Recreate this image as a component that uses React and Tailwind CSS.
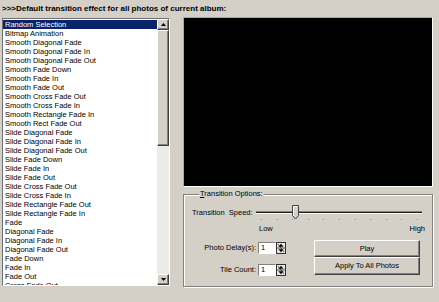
const effects = [
  "Random Selection",
  "Bitmap Animation",
  "Smooth Diagonal Fade",
  "Smooth Diagonal Fade In",
  "Smooth Diagonal Fade Out",
  "Smooth Fade Down",
  "Smooth Fade In",
  "Smooth Fade Out",
  "Smooth Cross Fade Out",
  "Smooth Cross Fade In",
  "Smooth Rectangle Fade In",
  "Smooth Rect Fade Out",
  "Slide Diagonal Fade",
  "Slide Diagonal Fade In",
  "Slide Diagonal Fade Out",
  "Slide Fade Down",
  "Slide Fade In",
  "Slide Fade Out",
  "Slide Cross Fade Out",
  "Slide Cross Fade In",
  "Slide Rectangle Fade Out",
  "Slide Rectangle Fade In",
  "Fade",
  "Diagonal Fade",
  "Diagonal Fade In",
  "Diagonal Fade Out",
  "Fade Down",
  "Fade In",
  "Fade Out",
  "Cross Fade Out",
];

function ScrollButton({ dir }) {
  return (
    <div className="flex h-[11px] items-center justify-center border border-t-white border-l-white border-r-[#404040] border-b-[#404040] bg-[#d4d0c8] shadow-[inset_-1px_-1px_0_#808080]">
      <svg width="5" height="3" viewBox="0 0 5 3">
        <path d={dir === "up" ? "M2.5 0L5 3H0z" : "M0 0h5L2.5 3z"} fill="#000" />
      </svg>
    </div>
  );
}

function SpinBox() {
  return (
    <div className="flex h-[12px]">
      <div className="flex w-[18px] items-center border border-t-[#808080] border-l-[#808080] border-r-white border-b-white bg-white pl-[2px] leading-none">
        1
      </div>
      <svg width="10" height="12" viewBox="0 0 10 12">
        <rect x="0.5" y="0.5" width="9" height="11" fill="#e8e6e0" stroke="#303030" />
        <line x1="1" y1="6" x2="9" y2="6" stroke="#303030" strokeWidth="0.8" />
        <path d="M5 1.8L7.6 4.8H2.4z" fill="#000" />
        <path d="M2.4 7.2h5.2L5 10.2z" fill="#000" />
        <path d="M2 2L8 10" stroke="#000" strokeWidth="0.6" />
      </svg>
    </div>
  );
}

function SpeedSlider() {
  const ticks = Array.from({ length: 11 }, (_, i) => 5 + i * 15.6);
  return (
    <svg width="166" height="17" viewBox="0 0 166 17">
      <rect x="0" y="6" width="166" height="1" fill="#808080" />
      <rect x="0" y="7" width="166" height="1" fill="#202020" />
      <rect x="0" y="8" width="166" height="1" fill="#ffffff" />
      {ticks.map((x) => (
        <rect key={x} x={Math.round(x)} y="14" width="1" height="1" fill="#8a8a8a" />
      ))}
      <path d="M36.5 0.5h6v10l-3 3.5l-3-3.5z" fill="#d4d0c8" stroke="#404040" />
      <path d="M37.5 11V1.5h4" fill="none" stroke="#ffffff" />
    </svg>
  );
}

export default function App() {
  return (
    <div
      className="h-[302px] w-[439px] overflow-hidden bg-[#d4d0c8] text-black"
      style={{ fontFamily: '"Liberation Sans", Arial, sans-serif' }}
    >
      <div className="h-[17px] pl-[2px] pt-[4px] text-[8px] font-bold leading-[10px]">
        &gt;&gt;&gt;Default transition effect for all photos of current album:
      </div>
      <div className="flex">
        {/* effect list */}
        <div className="ml-[2px] mt-[1px] flex h-[268px] w-[168px] border border-t-[#6f6f6f] border-l-[#6f6f6f] border-r-white border-b-white bg-white">
          <div className="flex-1 overflow-hidden pt-[1px] text-[7.5px] leading-[9px]">
            {effects.map((name, i) => (
              <div
                key={name}
                className={
                  i === 0
                    ? "h-[9px] whitespace-nowrap bg-[#0a246a] px-[2px] text-white"
                    : "h-[9px] whitespace-nowrap px-[2px]"
                }
              >
                {name}
              </div>
            ))}
          </div>
          <div className="flex w-[12px] flex-col">
            <ScrollButton dir="up" />
            <div className="h-[116px] border border-t-white border-l-white border-r-[#404040] border-b-[#404040] bg-[#d4d0c8] shadow-[inset_-1px_-1px_0_#808080]" />
            <div className="flex-1 bg-[#ecebe6]" />
            <ScrollButton dir="down" />
          </div>
        </div>

        {/* preview + options */}
        <div className="ml-[13px] flex w-[250px] flex-col">
          <div className="h-[170px] border border-t-[#a8a8a8] border-l-[#a8a8a8] border-r-white border-b-white bg-black" />
          <fieldset className="mt-[2px] h-[98px] border border-[#808080] pl-[8px] text-[7.5px] shadow-[inset_1px_1px_0_#fff,1px_1px_0_#fff]">
            <legend className="ml-[7px] bg-[#d4d0c8] px-[1px] leading-[10px]">
              <span className="underline">T</span>ransition Options:
            </legend>
            <div className="mt-[6px] flex items-start">
              <div className="mt-[3px] w-[64px] leading-[10px]">Transition&nbsp; Speed:</div>
              <SpeedSlider />
            </div>
            <div className="mt-[2px] flex h-[10px] w-[233px] items-center justify-between pl-[67px] leading-[10px]">
              <span>Low</span>
              <span>High</span>
            </div>
            <div className="mt-[6px] flex">
              <div className="flex flex-col">
                <div className="mt-[2px] flex h-[12px] items-center">
                  <div className="w-[64px] text-right">Photo Delay(s):</div>
                  <div className="ml-[2px]">
                    <SpinBox />
                  </div>
                </div>
                <div className="mt-[10px] flex h-[12px] items-center">
                  <div className="w-[64px] text-right">Tile Count:</div>
                  <div className="ml-[2px]">
                    <SpinBox />
                  </div>
                </div>
              </div>
              <div className="ml-[28px] flex w-[106px] flex-col">
                <button className="flex h-[17px] items-center justify-center border border-t-white border-l-white border-r-[#404040] border-b-[#404040] bg-[#d4d0c8] shadow-[inset_-1px_-1px_0_#808080]">
                  Play
                </button>
                <button className="flex h-[18px] items-center justify-center border border-t-white border-l-white border-r-[#404040] border-b-[#404040] bg-[#d4d0c8] shadow-[inset_-1px_-1px_0_#808080]">
                  Apply To All Photos
                </button>
              </div>
            </div>
          </fieldset>
        </div>
      </div>
    </div>
  );
}
